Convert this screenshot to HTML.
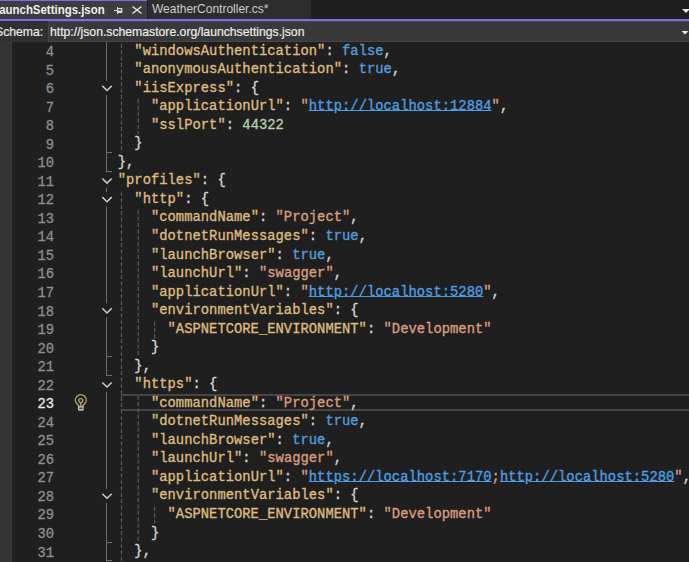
<!DOCTYPE html>
<html><head><meta charset="utf-8">
<style>
html,body{margin:0;padding:0;}
body{width:689px;height:562px;overflow:hidden;position:relative;background:#1f1f1f;font-family:"Liberation Sans",sans-serif;}
.a{position:absolute;}
.ln{position:absolute;left:0;width:54px;text-align:right;font:13.81px/20px "Liberation Mono",monospace;color:#8e8e8e;white-space:pre;-webkit-text-stroke:0.3px currentColor;}
.cl{position:absolute;font:13.81px/20px "Liberation Mono",monospace;letter-spacing:0.028px;white-space:pre;color:#d4d4d4;-webkit-text-stroke:0.35px currentColor;}
.k{color:#dcba7e}.s{color:#d99c7f}.b{color:#569cd6}.n{color:#b5cea8}.p{color:#d4d4d4}.u{color:#4e9de0;text-decoration:underline;text-underline-offset:0px;}
</style></head><body>

<div class="a" style="left:0;top:0;width:689px;height:19px;background:#1f1f1f"></div>
<div class="a" style="left:0;top:0;width:147px;height:19px;background:#3d3d3d"></div>
<div class="a" style="left:0;top:0;width:147px;height:1px;background:#7b6af5"></div>
<div class="a" style="left:148px;top:0;width:163px;height:19px;background:#2d2d2d"></div>
<div class="a" style="left:-4px;top:1px;height:18px;font:bold 13px/18px 'Liberation Sans';color:#f0f0f0;white-space:pre;transform:scaleX(0.88);transform-origin:0 0">launchSettings.json</div>
<div class="a" style="left:152px;top:0px;height:18px;font:13px/18px 'Liberation Sans';color:#cccccc;white-space:pre;transform:scaleX(0.922);transform-origin:0 0">WeatherController.cs*</div>
<svg class="a" style="left:0;top:0" width="689" height="42">
<rect x="114" y="10" width="3.5" height="1" fill="#dcdcdc"/>
<rect x="117" y="7" width="1" height="7" fill="#dcdcdc"/>
<rect x="117.5" y="8" width="4.8" height="5" fill="#dcdcdc"/>
<rect x="118.3" y="9" width="2.6" height="1.7" fill="#3d3d3d"/>
<path d="M132.5 6.5 L141.5 13.5 M141.5 6.5 L132.5 13.5" stroke="#e6e6e6" stroke-width="1.5" fill="none"/>
<path d="M682 9 L690 9 L686 13 Z" fill="#e6e6e6"/>
</svg>
<div class="a" style="left:0;top:19px;width:689px;height:2px;background:#7b6af5"></div>
<div class="a" style="left:0;top:21px;width:689px;height:21px;background:#303030"></div>
<div class="a" style="left:48px;top:21px;width:650px;height:20px;background:#393939;border:1px solid #474747;box-sizing:border-box;height:21px"></div>
<div class="a" style="left:-5px;top:22px;height:19px;font:13px/19px 'Liberation Sans';color:#ececec;white-space:pre;-webkit-text-stroke:0.2px currentColor;transform:scaleX(0.939);transform-origin:0 0">Schema:</div>
<div class="a" style="left:50px;top:22px;height:19px;font:13px/19px 'Liberation Sans';color:#ececec;white-space:pre;-webkit-text-stroke:0.2px currentColor;transform:scaleX(0.939);transform-origin:0 0">http://json.schemastore.org/launchsettings.json</div>
<svg class="a" style="left:0;top:0" width="689" height="42"><path d="M681.5 31 L688.5 31 L685 34.5 Z" fill="#e6e6e6"/></svg>
<div class="a" style="left:0;top:42px;width:11px;height:520px;background:#333333"></div>
<div class="a" style="left:11px;top:42px;width:1px;height:520px;background:#393939"></div>
<div class="a" style="left:121px;top:394px;width:570px;height:17px;border:2px solid #464646;border-left-width:0;box-sizing:border-box"></div>
<svg class="a" style="left:0;top:0" width="689" height="562">
<line x1="121.5" y1="43.80" x2="121.5" y2="152.85" stroke="#5a5a5a" stroke-width="1.2" stroke-dasharray="4.2 2.2"/>
<line x1="121.5" y1="191.73" x2="121.5" y2="562.00" stroke="#5a5a5a" stroke-width="1.2" stroke-dasharray="4.2 2.2"/>
<line x1="138.2" y1="99.04" x2="138.2" y2="134.32" stroke="#5a5a5a" stroke-width="1.2" stroke-dasharray="4.2 2.2"/>
<line x1="138.2" y1="210.26" x2="138.2" y2="356.76" stroke="#5a5a5a" stroke-width="1.2" stroke-dasharray="4.2 2.2"/>
<line x1="138.2" y1="395.63" x2="138.2" y2="542.13" stroke="#5a5a5a" stroke-width="1.2" stroke-dasharray="4.2 2.2"/>
<line x1="154.6" y1="321.49" x2="154.6" y2="338.22" stroke="#5a5a5a" stroke-width="1.2" stroke-dasharray="4.2 2.2"/>
<line x1="154.6" y1="506.86" x2="154.6" y2="523.59" stroke="#5a5a5a" stroke-width="1.2" stroke-dasharray="4.2 2.2"/>
<line x1="106.5" y1="42.00" x2="106.5" y2="80.97" stroke="#6e6e6e" stroke-width="1"/>
<line x1="106.5" y1="94.97" x2="106.5" y2="172.39" stroke="#6e6e6e" stroke-width="1"/>
<line x1="106" y1="152.5" x2="112" y2="152.5" stroke="#6e6e6e" stroke-width="1"/>
<line x1="106" y1="171.5" x2="112" y2="171.5" stroke="#6e6e6e" stroke-width="1"/>
<line x1="106.5" y1="187.66" x2="106.5" y2="192.20" stroke="#6e6e6e" stroke-width="1"/>
<line x1="106.5" y1="206.20" x2="106.5" y2="303.42" stroke="#6e6e6e" stroke-width="1"/>
<line x1="106.5" y1="317.42" x2="106.5" y2="375.80" stroke="#6e6e6e" stroke-width="1"/>
<line x1="106" y1="356.5" x2="112" y2="356.5" stroke="#6e6e6e" stroke-width="1"/>
<line x1="106" y1="375.5" x2="112" y2="375.5" stroke="#6e6e6e" stroke-width="1"/>
<line x1="106.5" y1="391.57" x2="106.5" y2="488.79" stroke="#6e6e6e" stroke-width="1"/>
<line x1="106.5" y1="502.79" x2="106.5" y2="562.00" stroke="#6e6e6e" stroke-width="1"/>
<line x1="106" y1="542.5" x2="112" y2="542.5" stroke="#6e6e6e" stroke-width="1"/>
<line x1="106" y1="560.5" x2="112" y2="560.5" stroke="#6e6e6e" stroke-width="1"/>
<polyline points="102.3,85.87 107,90.47 111.7,85.87" fill="none" stroke="#cdcdcd" stroke-width="1.5"/>
<polyline points="102.3,178.56 107,183.16 111.7,178.56" fill="none" stroke="#cdcdcd" stroke-width="1.5"/>
<polyline points="102.3,197.10 107,201.70 111.7,197.10" fill="none" stroke="#cdcdcd" stroke-width="1.5"/>
<polyline points="102.3,308.32 107,312.92 111.7,308.32" fill="none" stroke="#cdcdcd" stroke-width="1.5"/>
<polyline points="102.3,382.47 107,387.07 111.7,382.47" fill="none" stroke="#cdcdcd" stroke-width="1.5"/>
<polyline points="102.3,493.69 107,498.29 111.7,493.69" fill="none" stroke="#cdcdcd" stroke-width="1.5"/>
</svg>
<svg class="a" style="left:0;top:0" width="689" height="562">
<path d="M78.9 405.9 L76.7 403.6 A5.4 5.4 0 1 1 84.9 403.6 L82.7 405.9" fill="none" stroke="#b09c6c" stroke-width="1.5" stroke-linejoin="round"/>
<circle cx="80.8" cy="400.6" r="2.0" fill="none" stroke="#b09c6c" stroke-width="1.4"/>
<line x1="80.8" y1="402.5" x2="80.8" y2="405.8" stroke="#b09c6c" stroke-width="1.5"/>
<rect x="77.9" y="405.8" width="5.8" height="5" rx="1" fill="#b4b4b4"/>
<ellipse cx="80.8" cy="408.2" rx="1.8" ry="0.8" fill="#3a3a3a"/>
</svg>
<div class="ln" style="top:43.00px;color:#8e8e8e">4</div>
<div class="cl" style="left:134.33px;top:42.00px"><span class="k">&quot;windowsAuthentication&quot;</span><span class="p">: </span><span class="b">false</span><span class="p">,</span></div>
<div class="ln" style="top:61.54px;color:#8e8e8e">5</div>
<div class="cl" style="left:134.33px;top:60.00px"><span class="k">&quot;anonymousAuthentication&quot;</span><span class="p">: </span><span class="b">true</span><span class="p">,</span></div>
<div class="ln" style="top:80.07px;color:#8e8e8e">6</div>
<div class="cl" style="left:134.33px;top:79.00px"><span class="k">&quot;iisExpress&quot;</span><span class="p">: {</span></div>
<div class="ln" style="top:98.61px;color:#8e8e8e">7</div>
<div class="cl" style="left:150.95px;top:97.00px"><span class="k">&quot;applicationUrl&quot;</span><span class="p">: </span><span class="s">&quot;</span><span class="u">http://localhost:12884</span><span class="s">&quot;</span><span class="p">,</span></div>
<div class="ln" style="top:117.15px;color:#8e8e8e">8</div>
<div class="cl" style="left:150.95px;top:116.00px"><span class="k">&quot;sslPort&quot;</span><span class="p">: </span><span class="n">44322</span></div>
<div class="ln" style="top:135.69px;color:#8e8e8e">9</div>
<div class="cl" style="left:134.33px;top:134.00px"><span class="p">}</span></div>
<div class="ln" style="top:154.22px;color:#8e8e8e">10</div>
<div class="cl" style="left:117.72px;top:153.00px"><span class="p">},</span></div>
<div class="ln" style="top:172.76px;color:#8e8e8e">11</div>
<div class="cl" style="left:117.72px;top:171.00px"><span class="k">&quot;profiles&quot;</span><span class="p">: {</span></div>
<div class="ln" style="top:191.30px;color:#8e8e8e">12</div>
<div class="cl" style="left:134.33px;top:190.00px"><span class="k">&quot;http&quot;</span><span class="p">: {</span></div>
<div class="ln" style="top:209.83px;color:#8e8e8e">13</div>
<div class="cl" style="left:150.95px;top:208.00px"><span class="k">&quot;commandName&quot;</span><span class="p">: </span><span class="s">&quot;Project&quot;</span><span class="p">,</span></div>
<div class="ln" style="top:228.37px;color:#8e8e8e">14</div>
<div class="cl" style="left:150.95px;top:227.00px"><span class="k">&quot;dotnetRunMessages&quot;</span><span class="p">: </span><span class="b">true</span><span class="p">,</span></div>
<div class="ln" style="top:246.91px;color:#8e8e8e">15</div>
<div class="cl" style="left:150.95px;top:246.00px"><span class="k">&quot;launchBrowser&quot;</span><span class="p">: </span><span class="b">true</span><span class="p">,</span></div>
<div class="ln" style="top:265.44px;color:#8e8e8e">16</div>
<div class="cl" style="left:150.95px;top:264.00px"><span class="k">&quot;launchUrl&quot;</span><span class="p">: </span><span class="s">&quot;swagger&quot;</span><span class="p">,</span></div>
<div class="ln" style="top:283.98px;color:#8e8e8e">17</div>
<div class="cl" style="left:150.95px;top:283.00px"><span class="k">&quot;applicationUrl&quot;</span><span class="p">: </span><span class="s">&quot;</span><span class="u">http://localhost:5280</span><span class="s">&quot;</span><span class="p">,</span></div>
<div class="ln" style="top:302.52px;color:#8e8e8e">18</div>
<div class="cl" style="left:150.95px;top:301.00px"><span class="k">&quot;environmentVariables&quot;</span><span class="p">: {</span></div>
<div class="ln" style="top:321.06px;color:#8e8e8e">19</div>
<div class="cl" style="left:167.56px;top:320.00px"><span class="k">&quot;ASPNETCORE_ENVIRONMENT&quot;</span><span class="p">: </span><span class="s">&quot;Development&quot;</span></div>
<div class="ln" style="top:339.59px;color:#8e8e8e">20</div>
<div class="cl" style="left:150.95px;top:338.00px"><span class="p">}</span></div>
<div class="ln" style="top:358.13px;color:#8e8e8e">21</div>
<div class="cl" style="left:134.33px;top:357.00px"><span class="p">},</span></div>
<div class="ln" style="top:376.67px;color:#8e8e8e">22</div>
<div class="cl" style="left:134.33px;top:375.00px"><span class="k">&quot;https&quot;</span><span class="p">: {</span></div>
<div class="ln" style="top:395.20px;color:#e8e8e8">23</div>
<div class="cl" style="left:150.95px;top:394.00px"><span class="k">&quot;commandName&quot;</span><span class="p">: </span><span class="s">&quot;Project&quot;</span><span class="p">,</span></div>
<div class="ln" style="top:413.74px;color:#8e8e8e">24</div>
<div class="cl" style="left:150.95px;top:412.00px"><span class="k">&quot;dotnetRunMessages&quot;</span><span class="p">: </span><span class="b">true</span><span class="p">,</span></div>
<div class="ln" style="top:432.28px;color:#8e8e8e">25</div>
<div class="cl" style="left:150.95px;top:431.00px"><span class="k">&quot;launchBrowser&quot;</span><span class="p">: </span><span class="b">true</span><span class="p">,</span></div>
<div class="ln" style="top:450.81px;color:#8e8e8e">26</div>
<div class="cl" style="left:150.95px;top:449.00px"><span class="k">&quot;launchUrl&quot;</span><span class="p">: </span><span class="s">&quot;swagger&quot;</span><span class="p">,</span></div>
<div class="ln" style="top:469.35px;color:#8e8e8e">27</div>
<div class="cl" style="left:150.95px;top:468.00px"><span class="k">&quot;applicationUrl&quot;</span><span class="p">: </span><span class="s">&quot;</span><span class="u">https://localhost:7170</span><span class="s">;</span><span class="u">http://localhost:5280</span><span class="s">&quot;</span><span class="p">,</span></div>
<div class="ln" style="top:487.89px;color:#8e8e8e">28</div>
<div class="cl" style="left:150.95px;top:486.00px"><span class="k">&quot;environmentVariables&quot;</span><span class="p">: {</span></div>
<div class="ln" style="top:506.42px;color:#8e8e8e">29</div>
<div class="cl" style="left:167.56px;top:505.00px"><span class="k">&quot;ASPNETCORE_ENVIRONMENT&quot;</span><span class="p">: </span><span class="s">&quot;Development&quot;</span></div>
<div class="ln" style="top:524.96px;color:#8e8e8e">30</div>
<div class="cl" style="left:150.95px;top:524.00px"><span class="p">}</span></div>
<div class="ln" style="top:543.50px;color:#8e8e8e">31</div>
<div class="cl" style="left:134.33px;top:542.00px"><span class="p">},</span></div>
</body></html>
